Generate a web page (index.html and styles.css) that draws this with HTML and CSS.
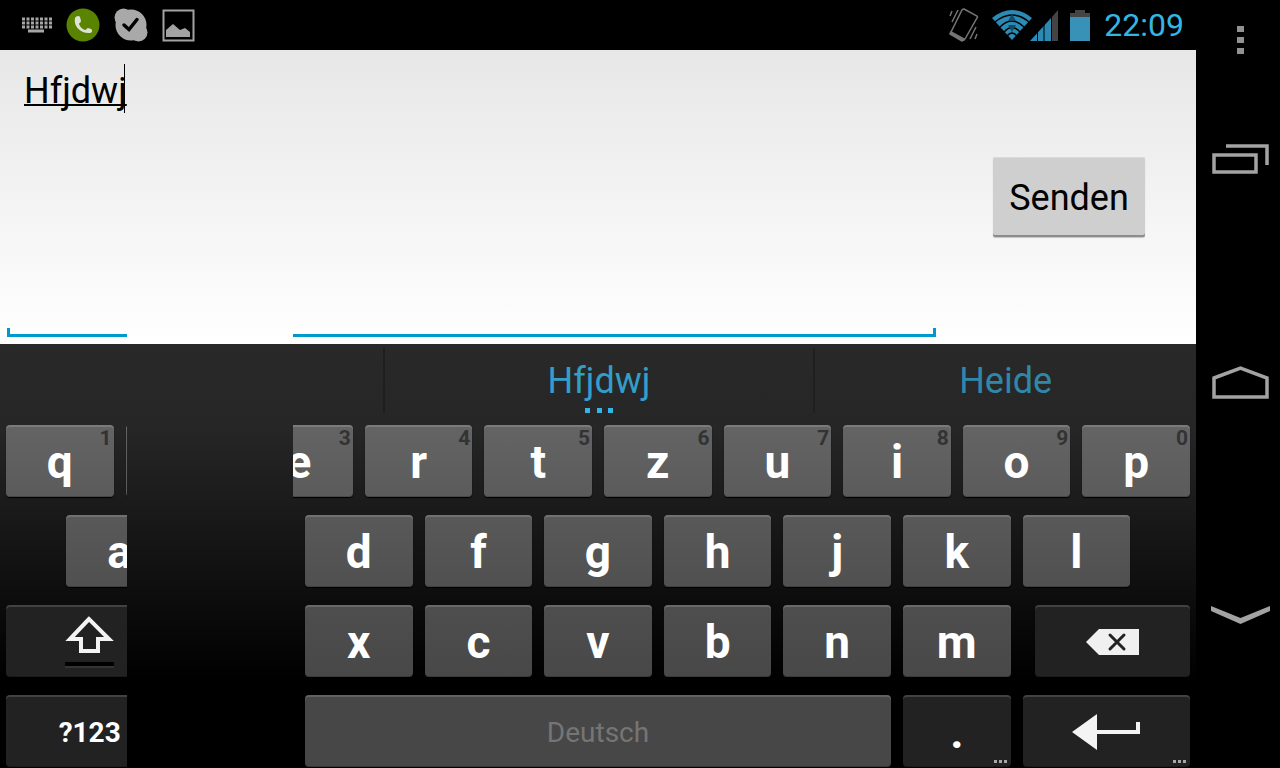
FILE: index.html
```html
<!DOCTYPE html>
<html lang="de">
<head>
  <meta charset="UTF-8">
  <meta name="viewport" content="width=device-width, initial-scale=1">
  <title>Nachricht</title>
  <link rel="stylesheet" href="styles.css">
</head>
<body>
  <div class="main">
    <header class="status-bar">
      <div class="notifications">
        <svg width="30" height="18" viewBox="0 0 30 18">
          <g stroke="#a6a6a6" stroke-width="3">
            <path d="M0 3h30M0 7h30M0 11h30" stroke-dasharray="3 1.5"/>
            <path d="M6 15h16"/>
          </g>
        </svg>
        <svg width="34" height="34" viewBox="0 0 34 34">
          <circle cx="17" cy="17" r="16.500" fill="#5a8400"/>
          <path d="M9 10c1-2 4-3 5-1l1 4c0 1.500-2 2-2 3 1 3 3 5 6 6 1.500 0 2-2 3-2l3 1c2 1 1 4-1 4-8 1-17-6-15-15z" fill="#dfe3d6"/>
        </svg>
        <svg width="34" height="34" viewBox="0 0 34 34">
          <g fill="#a9a9a9">
            <circle cx="17" cy="17" r="15.500"/>
            <circle cx="9.500" cy="9.500" r="9"/>
            <circle cx="24.500" cy="24.500" r="9"/>
          </g>
          <path d="M10 17l5 4.500 8-10" fill="none" stroke="#000" stroke-width="3.500" stroke-linecap="round"/>
        </svg>
        <svg width="33" height="33" viewBox="0 0 33 33">
          <path d="M1.500 1.500h30v30h-30z" fill="none" stroke="#a3a3a3" stroke-width="2"/>
          <path d="M4 28v-7l7-6 7 6 5-2 5 4v5z" fill="#a3a3a3"/>
        </svg>
      </div>
      <div class="indicators">
        <svg class="vibrate" width="30" height="34" viewBox="0 0 30 34">
          <g fill="none" stroke="#757575" stroke-width="1.500">
            <path d="M15 1l13 7q1 1 0 2L16 31q-1 2-3 1L2 26q-1-1 0-2L13 2q1-1 2-1z"/>
            <path d="M2 24l13 7-2 2L1 26z" fill="#757575"/>
            <path d="M1 8l2-5M3 14l6-12M21 31l6-12M26 31l2-5"/>
          </g>
        </svg>
        <svg width="40" height="32" viewBox="0 0 40 32">
          <path d="M0 9Q20-7 40 9L20 31z" fill="#2b8bb5"/>
          <g fill="none" stroke="#000" stroke-width="1.500">
            <path d="M3 13Q20-1 37 13"/>
            <path d="M8 18Q20 6 32 18"/>
            <path d="M12 23Q20 14 28 23"/>
            <path d="M15 27Q20 21 25 27"/>
          </g>
          <path d="M20 5l4 7h-8zM16 16h8l-4 7z" fill="#164c63"/>
        </svg>
        <svg class="signal" width="28" height="32" viewBox="0 0 28 32">
          <path d="M0 32L21 9v23z" fill="#2b8bb5"/>
          <path d="M22 8l6-7v31h-6z" fill="#444"/>
          <path d="M7.500 20v12M14 14v18M21.500 6v26" stroke="#000"/>
        </svg>
        <svg class="battery" width="20" height="31" viewBox="0 0 20 31">
          <path d="M0 3h5V0h10v3h5v5H0z" fill="#444"/>
          <path d="M0 7h20v24H0z" fill="#3892b7"/>
        </svg>
        <time class="clock">22:09</time>
      </div>
    </header>

    <form class="compose">
      <div class="editor">
        <textarea class="message" aria-label="Nachricht" spellcheck="false">Hfjdwj</textarea>
        <span class="caret"></span>
      </div>
      <div class="actions">
        <button class="send" type="button">Senden</button>
      </div>
      <div class="strip"></div>
    </form>

    <section class="keyboard">
      <div class="suggestions">
        <button class="suggestion" type="button" aria-label="Kein Vorschlag"></button>
        <button class="suggestion current" type="button">Hfjdwj
          <svg class="more" width="28" height="5" viewBox="0 0 28 5"><path d="M0 0h5v5H0zM12 0h5v5h-5zM23 0h5v5h-5z" fill="#33b5e5"/></svg>
        </button>
        <button class="suggestion alternative" type="button">Heide</button>
      </div>

      <div class="keys">
        <div class="row">
          <button class="key" type="button">q<span class="hint">1</span></button>
          <button class="key" type="button" aria-label="w"></button>
          <button class="key" type="button">e<span class="hint">3</span></button>
          <button class="key" type="button">r<span class="hint">4</span></button>
          <button class="key" type="button">t<span class="hint">5</span></button>
          <button class="key" type="button">z<span class="hint">6</span></button>
          <button class="key" type="button">u<span class="hint">7</span></button>
          <button class="key" type="button">i<span class="hint">8</span></button>
          <button class="key" type="button">o<span class="hint">9</span></button>
          <button class="key" type="button">p<span class="hint">0</span></button>
        </div>
        <div class="row row-home">
          <button class="key key-a" type="button">a</button>
          <button class="key key-d" type="button">d</button>
          <button class="key" type="button">f</button>
          <button class="key" type="button">g</button>
          <button class="key" type="button">h</button>
          <button class="key" type="button">j</button>
          <button class="key" type="button">k</button>
          <button class="key" type="button">l</button>
        </div>
        <div class="row row-shift">
          <button class="key dark wide" type="button" aria-label="Umschalt">
            <svg width="50" height="54" viewBox="0 0 50 54">
              <path d="M24 4L5 24h11v12h17V24h11z" fill="none" stroke="#f4f4f4" stroke-width="4"/>
              <path d="M0 47h49v4H0z" fill="#000"/>
              <path d="M0 52h49" stroke="#444"/>
            </svg>
          </button>
          <button class="key key-x" type="button">x</button>
          <button class="key" type="button">c</button>
          <button class="key" type="button">v</button>
          <button class="key" type="button">b</button>
          <button class="key" type="button">n</button>
          <button class="key" type="button">m</button>
          <button class="key dark wide backspace" type="button" aria-label="Löschen">
            <svg width="53" height="26" viewBox="0 0 53 26">
              <path d="M0 13L13 0h40v26H13z" fill="#f0f0f0"/>
              <path d="M24 6l14 14M38 6L24 20" stroke="#222" stroke-width="3" stroke-linecap="round"/>
            </svg>
          </button>
        </div>
        <div class="row">
          <button class="key dark wide symbols" type="button">?123</button>
          <button class="key space" type="button">Deutsch</button>
          <button class="key dark" type="button">.<svg class="key-more" width="13" height="3" viewBox="0 0 13 3"><path d="M0 0h3v3H0zM5 0h3v3H5zM10 0h3v3h-3z" fill="#a8a8a8"/></svg></button>
          <button class="key dark wide" type="button" aria-label="Eingabe">
            <svg width="69" height="36" viewBox="0 0 69 36">
              <path d="M0 18L25 0v16h39V8h4v12H25v16z" fill="#f4f4f4"/>
            </svg>
            <svg class="key-more" width="13" height="3" viewBox="0 0 13 3"><path d="M0 0h3v3H0zM5 0h3v3H5zM10 0h3v3h-3z" fill="#a8a8a8"/></svg>
          </button>
        </div>
      </div>
      <div class="strip"></div>
    </section>
  </div>

  <nav class="nav-bar">
    <button type="button" aria-label="Menü">
      <svg width="7" height="28" viewBox="0 0 7 28"><path d="M0 0h7v6H0zM0 11h7v6H0zM0 22h7v6H0z" fill="#929292"/></svg>
    </button>
    <button type="button" aria-label="Letzte Apps">
      <svg width="57" height="30" viewBox="0 0 57 30"><path d="M2 11h42v17H2zM14 2h41v19" fill="none" stroke="#a3a3a3" stroke-width="3.500"/></svg>
    </button>
    <button type="button" aria-label="Startseite">
      <svg width="57" height="34" viewBox="0 0 57 34"><path d="M2 13L28.500 3 55 13v19H2z" fill="none" stroke="#a3a3a3" stroke-width="3.500"/></svg>
    </button>
    <button type="button" aria-label="Tastatur schließen">
      <svg width="59" height="18" viewBox="0 0 59 18"><path d="M0 0l29.500 12L59 0v5L29.500 18 0 5z" fill="#a3a3a3"/></svg>
    </button>
  </nav>
</body>
</html>
```

FILE: styles.css
```css
* {
  box-sizing: border-box;
}
body {
  margin: 0;
  min-height: 100vh;
  display: flex;
  background: #000;
  font-family: Roboto, sans-serif;
}
button {
  padding: 0;
  border: none;
  background: none;
  font-family: inherit;
  cursor: pointer;
}
svg {
  display: block;
}
.main {
  flex: 1;
  display: flex;
  flex-direction: column;
}

/* status bar */
.status-bar {
  height: 50px;
  padding: 0 12px 0 22px;
  display: flex;
  justify-content: space-between;
  align-items: center;
}
.notifications {
  display: flex;
  align-items: center;
  gap: 14px;
}
.indicators {
  display: flex;
  align-items: center;
}
.vibrate {
  margin-right: 13px;
}
.signal {
  margin-left: -2px;
}
.battery {
  margin: 0 14px 0 12px;
}
.clock {
  color: #33b5e5;
  font-size: 32px;
  line-height: 50px;
}

/* message form */
.compose {
  position: relative;
  flex: 1;
  display: flex;
  background: linear-gradient(#e7e7e7, #fff);
}
.editor {
  position: relative;
  flex: 1;
  display: flex;
  margin: 0 6px 7px 7px;
  border-bottom: 3px solid #0099cc;
}
.editor::before,
.editor::after {
  content: "";
  position: absolute;
  bottom: 0;
  width: 3px;
  height: 6px;
  background: #0099cc;
}
.editor::before {
  left: 0;
}
.editor::after {
  right: 0;
}
.message {
  flex: 1;
  padding: 20px 17px;
  border: none;
  outline: none;
  resize: none;
  background: none;
  color: #000;
  font-family: inherit;
  font-size: 36px;
  line-height: 42px;
  text-decoration: underline;
  text-decoration-thickness: 2px;
  text-decoration-skip-ink: none;
}
.caret {
  position: absolute;
  left: 117px;
  top: 14px;
  width: 1px;
  height: 49px;
  background: #000;
}
.actions {
  width: 254px;
  display: flex;
  justify-content: center;
  align-items: center;
}
.send {
  height: 80px;
  padding: 2px 16px 0;
  border-radius: 2px;
  background: #cfcfcf;
  color: #000;
  font-size: 36px;
  box-shadow: inset 0 1px #dadada, inset 0 -2px #8c8c8c, 0 1px 1px rgba(0,0,0,0.2);
}

/* blank band over the form and the keyboard */
.strip {
  position: absolute;
  top: 0;
  bottom: 0;
  left: 127px;
  width: 166px;
  background: inherit;
}

/* keyboard */
.keyboard {
  position: relative;
  background: linear-gradient(#292929, #262626 20%, #000 80%);
}
.suggestions {
  display: grid;
  grid-template-columns: 32fr 36fr 32fr;
  padding: 4px 0;
}
.suggestion {
  position: relative;
  height: 65px;
  padding-bottom: 0;
  color: #319fc9;
  font-size: 36px;
}
.suggestion + .suggestion {
  border-left: 2px solid #1f1f1f;
}
.alternative {
  color: #2f87aa;
}
.more {
  position: absolute;
  left: calc(50% - 14px);
  bottom: 0;
}
.keys {
  display: grid;
  gap: 18px;
  padding: 8px 0 1px;
}
.row {
  display: grid;
  grid-template-columns: repeat(20, 1fr);
}
.key {
  position: relative;
  grid-column-end: span 2;
  display: flex;
  justify-content: center;
  align-items: center;
  height: 72px;
  margin: 0 6px;
  padding-top: 2px;
  border-radius: 4px;
  background: linear-gradient(#646464, #5b5b5b);
  box-shadow: inset 0 2px rgba(255,255,255,0.15), inset 0 -1px rgba(0,0,0,0.2), 0 1px 1px #000;
  color: #fff;
  font-size: 46px;
  font-weight: bold;
}
.row-home .key {
  background: linear-gradient(#595959, #505050);
}
.row-shift .key {
  background: linear-gradient(#4e4e4e, #484848);
}
.key.dark,
.row-shift .dark {
  background: #222;
}
.key-a {
  grid-column: 2 / span 2;
}
.key-d,
.key-x {
  grid-column: 6 / span 2;
}
.key.wide {
  grid-column-end: span 3;
}
.key.backspace {
  margin-left: 18px;
}
.key.symbols {
  font-size: 28px;
}
.key.space {
  grid-column: 6 / span 10;
  background: #474747;
  color: #757575;
  font-size: 28px;
  font-weight: normal;
}
.hint {
  position: absolute;
  top: 1px;
  right: 2px;
  color: #333;
  font-size: 21px;
  line-height: 24px;
}
.key-more {
  position: absolute;
  right: 4px;
  bottom: 4px;
}

/* navigation */
.nav-bar {
  width: 84px;
  padding-left: 4px;
  display: grid;
  grid-template-rows: 80px 158px 288fr 178fr 64fr;
}
.nav-bar button {
  display: flex;
  justify-content: center;
  align-items: center;
}
```
